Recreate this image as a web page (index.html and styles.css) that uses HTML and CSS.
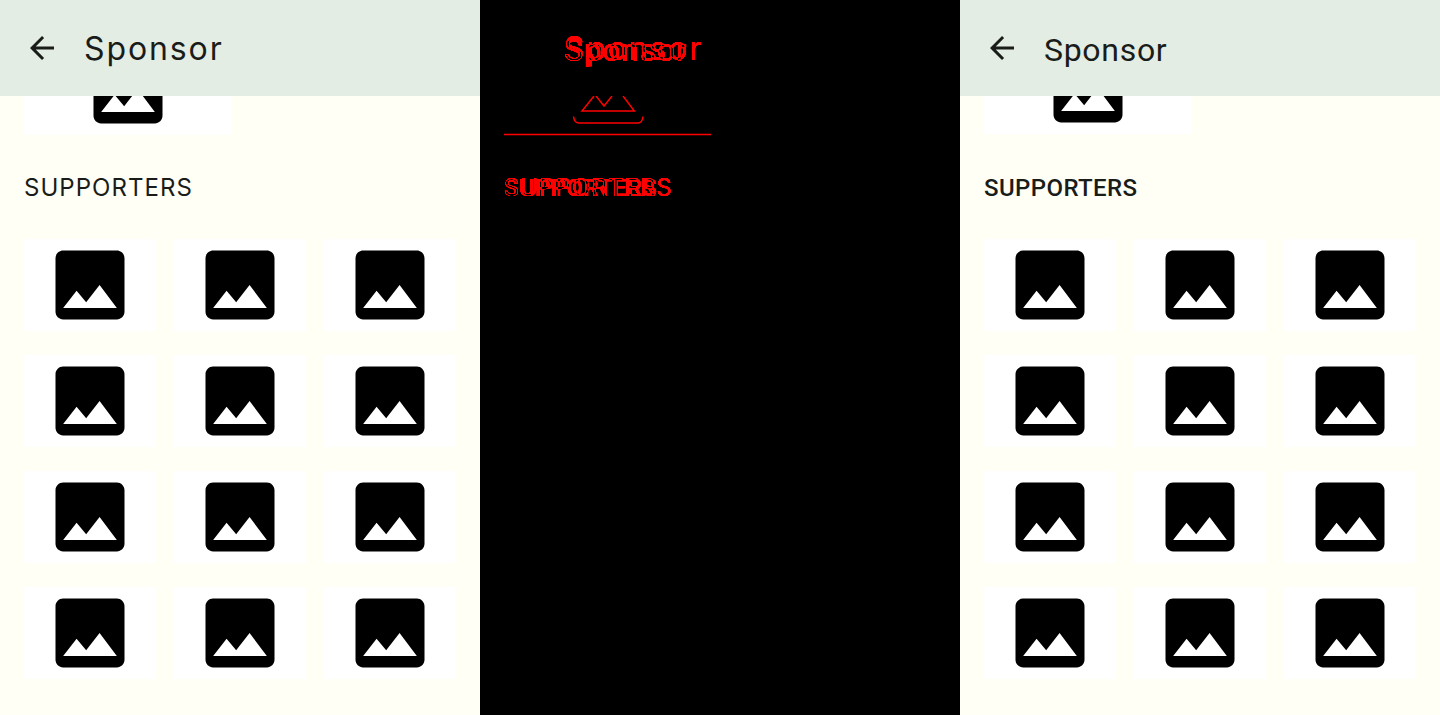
FILE: index.html
```html
<!DOCTYPE html>
<html lang="en">
<head>
    <meta charset="UTF-8">
    <meta name="viewport" content="width=device-width, initial-scale=1.0">
    <title>Sponsor</title>
    <link rel="stylesheet" href="styles.css">
</head>
<body>
    <svg class="defs" width="0" height="0">
        <symbol id="icon-image" viewBox="0 0 24 24">
            <path d="M21 19V5c0-1.1-.9-2-2-2H5c-1.100 0-2 .9-2 2v14c0 1.100.9 2 2 2h14c1.100 0 2-.9 2-2zM8.500 13.500l2.500 3.010L14.500 12l4.500 6H5l3.500-4.500z"/>
        </symbol>
        <symbol id="icon-back" viewBox="0 0 24 24">
            <path d="M20 11H7.830l5.590-5.590L12 4l-8 8 8 8 1.410-1.410L7.830 13H20v-2z"/>
        </symbol>
    </svg>

    <!-- before -->
    <section class="panel panel_a">
        <header class="bar">
            <svg class="back"><use href="#icon-back"/></svg>
            <h1 class="title title_a">Sponsor</h1>
        </header>
        <div class="content">
            <div class="card card_top"><svg class="pic"><use href="#icon-image"/></svg></div>
            <h2 class="label label_a">SUPPORTERS</h2>
            <div class="grid">
                <div class="card"><svg class="pic"><use href="#icon-image"/></svg></div>
                <div class="card"><svg class="pic"><use href="#icon-image"/></svg></div>
                <div class="card"><svg class="pic"><use href="#icon-image"/></svg></div>
                <div class="card"><svg class="pic"><use href="#icon-image"/></svg></div>
                <div class="card"><svg class="pic"><use href="#icon-image"/></svg></div>
                <div class="card"><svg class="pic"><use href="#icon-image"/></svg></div>
                <div class="card"><svg class="pic"><use href="#icon-image"/></svg></div>
                <div class="card"><svg class="pic"><use href="#icon-image"/></svg></div>
                <div class="card"><svg class="pic"><use href="#icon-image"/></svg></div>
                <div class="card"><svg class="pic"><use href="#icon-image"/></svg></div>
                <div class="card"><svg class="pic"><use href="#icon-image"/></svg></div>
                <div class="card"><svg class="pic"><use href="#icon-image"/></svg></div>
            </div>
        </div>
    </section>

    <!-- diff -->
    <section class="panel panel_diff">
        <header class="bar">
            <div class="back"></div>
            <div class="diff_text">
                <h1 class="title title_a">Sponsor</h1>
                <h1 class="title title_b diff_over">Sponsor</h1>
            </div>
        </header>
        <div class="content">
            <svg class="diff_card" viewBox="0 0 208 40">
                <path d="M90 0L78 15H130.300L119 0M92 0L100 10L108 0"/>
                <path d="M69.500 20.500C70 24.500 72 27 75 27H134C137 27 138.500 24.500 139 20.500"/>
                <path d="M0 38.500H207"/>
            </svg>
            <div class="diff_text diff_label">
                <h2 class="label label_a">SUPPORTERS</h2>
                <h2 class="label label_b diff_over">SUPPORTERS</h2>
            </div>
        </div>
    </section>

    <!-- after -->
    <section class="panel panel_b">
        <header class="bar">
            <svg class="back"><use href="#icon-back"/></svg>
            <h1 class="title title_b">Sponsor</h1>
        </header>
        <div class="content">
            <div class="card card_top"><svg class="pic"><use href="#icon-image"/></svg></div>
            <h2 class="label label_b">SUPPORTERS</h2>
            <div class="grid">
                <div class="card"><svg class="pic"><use href="#icon-image"/></svg></div>
                <div class="card"><svg class="pic"><use href="#icon-image"/></svg></div>
                <div class="card"><svg class="pic"><use href="#icon-image"/></svg></div>
                <div class="card"><svg class="pic"><use href="#icon-image"/></svg></div>
                <div class="card"><svg class="pic"><use href="#icon-image"/></svg></div>
                <div class="card"><svg class="pic"><use href="#icon-image"/></svg></div>
                <div class="card"><svg class="pic"><use href="#icon-image"/></svg></div>
                <div class="card"><svg class="pic"><use href="#icon-image"/></svg></div>
                <div class="card"><svg class="pic"><use href="#icon-image"/></svg></div>
                <div class="card"><svg class="pic"><use href="#icon-image"/></svg></div>
                <div class="card"><svg class="pic"><use href="#icon-image"/></svg></div>
                <div class="card"><svg class="pic"><use href="#icon-image"/></svg></div>
            </div>
        </div>
    </section>
</body>
</html>
```

FILE: styles.css
```css
*{margin:0;padding:0;box-sizing:border-box;}
html,body{width:100%;height:100%;overflow:hidden;}
body{display:flex;background:#000;}
.defs{position:absolute;}

.panel{width:480px;height:715px;overflow:hidden;background:#fffff6;color:#1a1c19;}
.panel_diff{background:#000;}

.bar{height:96px;padding:0 24px;display:flex;align-items:center;gap:24px;background:#e3ede4;position:relative;z-index:1;}
.panel_diff .bar{background:#000;}
.back{width:36px;height:36px;fill:#1a1c19;flex:none;}

.title{font-weight:400;line-height:44px;white-space:nowrap;}
.title_a{font-family:"Inter",sans-serif;font-size:32px;letter-spacing:1.9px;padding-top:2px;}
.title_b{font-family:"Roboto",sans-serif;font-size:32px;letter-spacing:.7px;padding-top:4px;}

.content{padding:0 24px;}

.card{height:92px;background:#fff;display:flex;justify-content:center;}
.card_top{width:208px;margin-top:-53px;}
.panel_b .card_top{margin-top:-54px;}
.pic{width:92px;height:92px;fill:#000;}

.label{height:32px;line-height:32px;margin:37px 0 35px;white-space:nowrap;}
.panel_b .label{margin-top:38px;}
.label_a{font-family:"Inter",sans-serif;font-size:24px;font-weight:400;letter-spacing:1.05px;}
.label_b{font-family:"Roboto",sans-serif;font-size:24px;font-weight:500;letter-spacing:.4px;}

.grid{display:grid;grid-template-columns:repeat(3,132px);grid-auto-rows:92px;gap:24px 18px;}

/* middle panel: red where the two sides do not match */
.diff_text{position:relative;isolation:isolate;background:#000;color:#f00;filter:brightness(3);width:180px;}
.diff_over{position:absolute;top:0;left:0;mix-blend-mode:difference;}
.diff_text .title_b{padding-top:3px;}
.diff_text .label{margin:0;}
.diff_card{display:block;width:208px;height:40px;fill:none;stroke:#f00;stroke-width:1.5;}
.diff_label{margin-top:36px;height:32px;}
```
